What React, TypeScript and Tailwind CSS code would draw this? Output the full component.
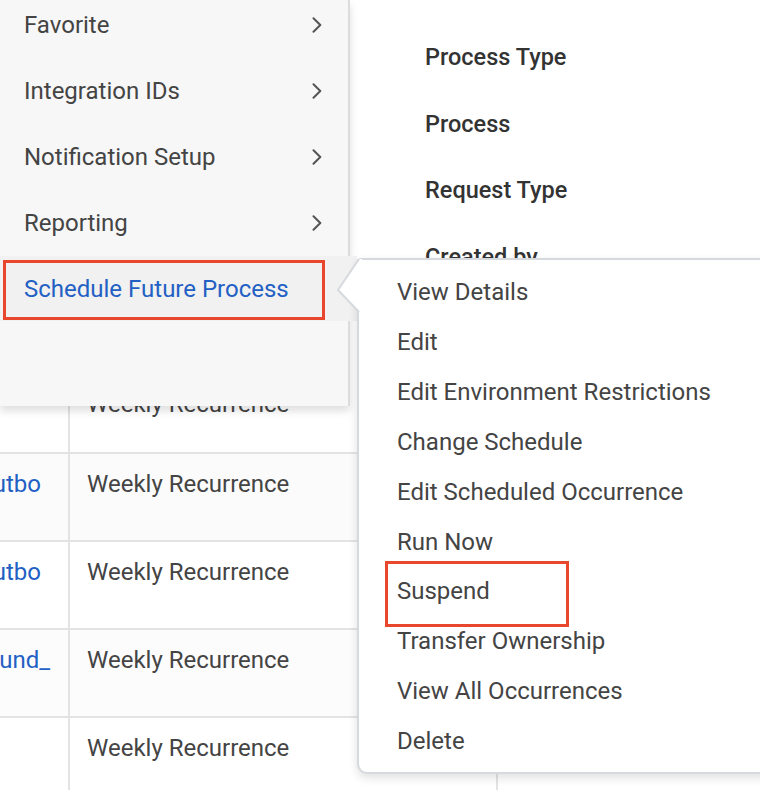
import React from "react";

const MENU_ITEMS = ["Favorite", "Integration IDs", "Notification Setup", "Reporting"];

const ACTIONS = [
  "View Details",
  "Edit",
  "Edit Environment Restrictions",
  "Change Schedule",
  "Edit Scheduled Occurrence",
  "Run Now",
  "Suspend",
  "Transfer Ownership",
  "View All Occurrences",
  "Delete",
];

const HEADERS = ["Process Type", "Process", "Request Type", "Created by"];

const ROWS = [
  { name: "", pad: "pr-[27px]", bg: "bg-white" },
  { name: "Mkto_Leads_Outbo", pad: "pr-[27px]", bg: "bg-[#fbfbfb]" },
  { name: "Mkto_Leads_Outbo", pad: "pr-[27px]", bg: "bg-white" },
  { name: "Mkto_Leads_Inbound_", pad: "pr-[18px]", bg: "bg-[#fcfcfc]" },
  { name: "", pad: "pr-[27px]", bg: "bg-white" },
];

function Chevron() {
  return (
    <svg width="10" height="16" viewBox="0 0 10 16" fill="none">
      <path d="M1.5 1.2 L8.3 8 L1.5 14.8" stroke="#555" strokeWidth="2" strokeLinecap="round" strokeLinejoin="round" />
    </svg>
  );
}

export default function App() {
  return (
    <div className="relative w-[760px] h-[790px] overflow-hidden bg-white font-['Roboto','Liberation_Sans',sans-serif] text-[24px]">
      {/* page underneath */}
      <div className="h-[370px] pl-[425px] pt-[24px]">
        {HEADERS.map((h) => (
          <div key={h} className="leading-[66.5px] font-medium text-[23.5px] text-[#333]">
            {h}
          </div>
        ))}
      </div>
      <div>
        {ROWS.map((row, i) => (
          <div
            key={i}
            className={`flex border-b-2 border-[#e3e3e3] ${row.bg} ${i === 0 ? "h-[84px]" : "h-[88px]"}`}
          >
            <div
              className={`w-[70px] shrink-0 border-r-2 border-[#e3e3e3] overflow-hidden flex justify-end ${row.pad} ${i === 0 ? "pt-[20px]" : "pt-[16px]"}`}
            >
              <div className="whitespace-nowrap leading-[28px] text-[#2360c4]">{row.name}</div>
            </div>
            <div
              className={`w-[428px] shrink-0 border-r-2 border-[#e3e3e3] pl-[17px] ${i === 0 ? "pt-[20px]" : "pt-[16px]"}`}
            >
              <div className="leading-[28px] text-[#444]">Weekly Recurrence</div>
            </div>
            <div className="flex-1" />
          </div>
        ))}
      </div>

      {/* flyout menu */}
      <div className="absolute top-0 left-0 w-[350px] h-[406px] bg-[#f7f7f7] border-r-2 border-[#dcdcdc] shadow-[0_5px_8px_rgba(0,0,0,0.13)]">
        <div className="mt-[-8px]">
          {MENU_ITEMS.map((m) => (
            <div key={m} className="h-[66px] flex items-center justify-between pl-[24px] pr-[26px] text-[#444]">
              <span>{m}</span>
              <Chevron />
            </div>
          ))}
          <div className="relative w-[357px] h-[65px] flex items-center pl-[24px] bg-[#f1f1f1] text-[#2360c4]">
            <span>Schedule Future Process</span>
            <div className="absolute left-[3px] top-[4px] w-[322px] h-[60px] border-[3px] border-[#e8472d]" />
          </div>
        </div>
      </div>

      {/* action dropdown */}
      <div className="absolute left-[357px] top-[258px] w-[430px] h-[516px] bg-white border-2 border-[#d6d9dd] rounded-tl-[4px] rounded-bl-[10px] shadow-[0_4px_10px_rgba(0,0,0,0.12)]">
        <svg className="absolute left-[-22px] top-[-1px]" width="25" height="54" viewBox="0 0 25 54" fill="none">
          <polygon points="25,0 22,0 1,31 22,53 25,53" fill="#fff" />
          <polyline points="22,0 1,31 22,53" stroke="#d6d9dd" strokeWidth="2" fill="none" />
        </svg>
        <div className="pt-[8px] pl-[38px] text-[#444]">
          {ACTIONS.map((a) => (
            <div key={a} className="relative leading-[49.9px] whitespace-nowrap">
              {a}
              {a === "Suspend" && (
                <div className="absolute left-[-12px] top-[-6px] w-[184px] h-[66px] border-[3px] border-[#e8472d]" />
              )}
            </div>
          ))}
        </div>
      </div>
    </div>
  );
}
